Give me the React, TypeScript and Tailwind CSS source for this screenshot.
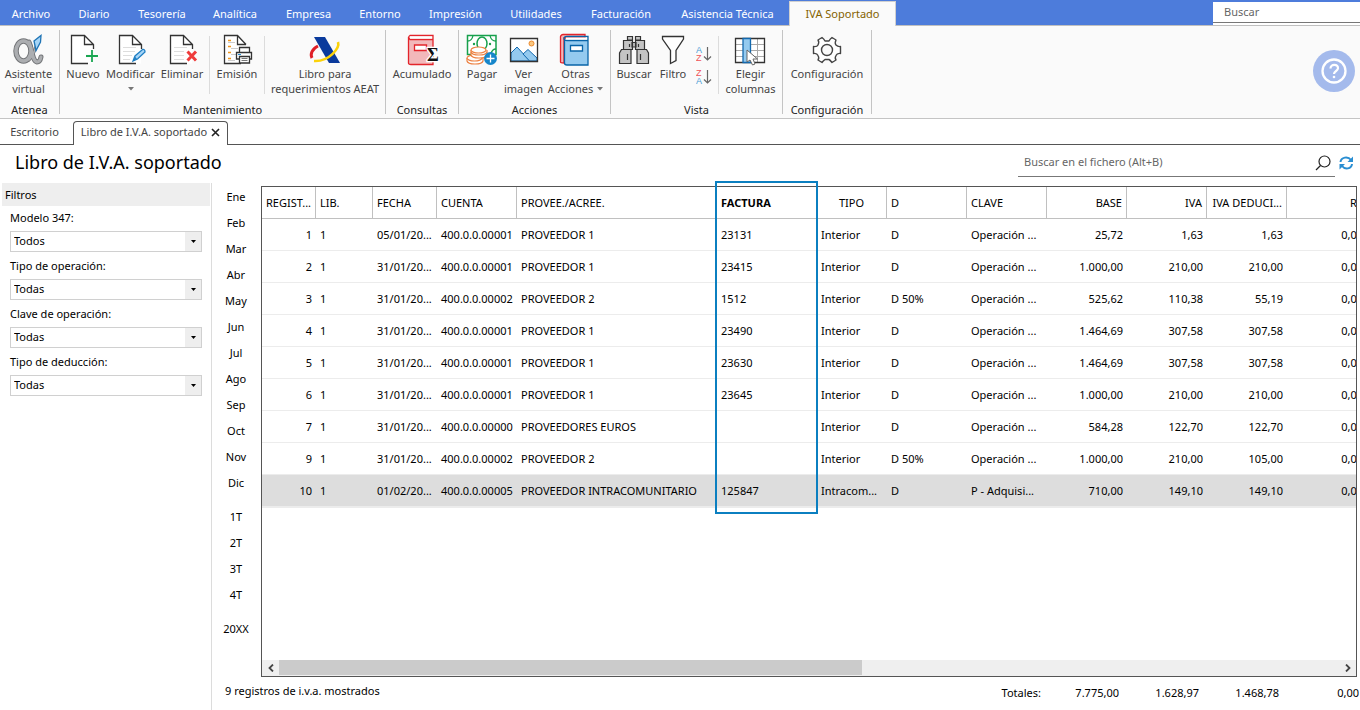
import React from "react";

type Item = { label: string; width: string };

const MENUS: Item[] = [
  { label: "Archivo", width: "w-[62px]" },
  { label: "Diario", width: "w-16" },
  { label: "Tesorería", width: "w-[72px]" },
  { label: "Analítica", width: "w-[74px]" },
  { label: "Empresa", width: "w-[73px]" },
  { label: "Entorno", width: "w-[70px]" },
  { label: "Impresión", width: "w-[81px]" },
  { label: "Utilidades", width: "w-[80px]" },
  { label: "Facturación", width: "w-[90px]" },
  { label: "Asistencia Técnica", width: "w-[123px]" },
];

const FILTERS = [
  { id: "modelo", label: "Modelo 347:", value: "Todos" },
  { id: "tipo-op", label: "Tipo de operación:", value: "Todas" },
  { id: "clave-op", label: "Clave de operación:", value: "Todas" },
  { id: "tipo-ded", label: "Tipo de deducción:", value: "Todas" },
];

const MONTHS = ["Ene", "Feb", "Mar", "Abr", "May", "Jun", "Jul", "Ago", "Sep", "Oct", "Nov", "Dic"];
const QUARTERS = ["1T", "2T", "3T", "4T"];

const COLUMNS = [
  { label: "REGIST...", col: "w-[54px]", align: "text-left font-normal", line: true },
  { label: "LIB.", col: "w-[57px]", align: "text-left font-normal", line: true },
  { label: "FECHA", col: "w-16", align: "text-left font-normal", line: true },
  { label: "CUENTA", col: "w-20", align: "text-left font-normal", line: true },
  { label: "PROVEE./ACREE.", col: "w-[200px]", align: "text-left font-normal", line: true },
  { label: "FACTURA", col: "w-[100px]", align: "text-left font-bold", line: true },
  { label: "TIPO", col: "w-[70px]", align: "text-center font-normal", line: true },
  { label: "D", col: "w-20", align: "text-left font-normal", line: true },
  { label: "CLAVE", col: "w-20", align: "text-left font-normal", line: true },
  { label: "BASE", col: "w-20", align: "text-right font-normal", line: true },
  { label: "IVA", col: "w-20", align: "text-right font-normal", line: true },
  { label: "IVA DEDUCI...", col: "w-20", align: "text-right font-normal", line: true },
  { label: "RE", col: "w-20", align: "text-right font-normal", line: false },
];

const RIGHT = [0, 9, 10, 11, 12];

const ROWS = [
  ["1", "1", "05/01/20...", "400.0.0.00001", "PROVEEDOR 1", "23131", "Interior", "D", "Operación ...", "25,72", "1,63", "1,63", "0,00"],
  ["2", "1", "31/01/20...", "400.0.0.00001", "PROVEEDOR 1", "23415", "Interior", "D", "Operación ...", "1.000,00", "210,00", "210,00", "0,00"],
  ["3", "1", "31/01/20...", "400.0.0.00002", "PROVEEDOR 2", "1512", "Interior", "D 50%", "Operación ...", "525,62", "110,38", "55,19", "0,00"],
  ["4", "1", "31/01/20...", "400.0.0.00001", "PROVEEDOR 1", "23490", "Interior", "D", "Operación ...", "1.464,69", "307,58", "307,58", "0,00"],
  ["5", "1", "31/01/20...", "400.0.0.00001", "PROVEEDOR 1", "23630", "Interior", "D", "Operación ...", "1.464,69", "307,58", "307,58", "0,00"],
  ["6", "1", "31/01/20...", "400.0.0.00001", "PROVEEDOR 1", "23645", "Interior", "D", "Operación ...", "1.000,00", "210,00", "210,00", "0,00"],
  ["7", "1", "31/01/20...", "400.0.0.00000", "PROVEEDORES EUROS", "", "Interior", "D", "Operación ...", "584,28", "122,70", "122,70", "0,00"],
  ["9", "1", "31/01/20...", "400.0.0.00002", "PROVEEDOR 2", "", "Interior", "D 50%", "Operación ...", "1.000,00", "210,00", "105,00", "0,00"],
  ["10", "1", "01/02/20...", "400.0.0.00005", "PROVEEDOR INTRACOMUNITARIO", "125847", "Intracom...", "D", "P - Adquisi...", "710,00", "149,10", "149,10", "0,00"],
];

function Icon({ children }: { children: React.ReactNode }) {
  return (
    <svg width="32" height="32" viewBox="0 0 32 32" fill="none" className="block shrink-0 overflow-visible" aria-hidden="true">
      {children}
    </svg>
  );
}

function Sheet() {
  return (
    <>
      <path d="M4.5 1.5H17.5L26 10.5V29.5H4.5Z" fill="#fff" />
      <path d="M26.5 15V10.5L17.5 1.5H4.5V29.5H21M17.5 1.5V10.5H26.5" stroke="#333" strokeWidth="1.3" />
    </>
  );
}

const AlphaIcon = () => (
  <Icon>
    <g stroke="#75777a" strokeLinecap="round">
      <ellipse cx="10.5" cy="17" rx="7.5" ry="10" strokeWidth="5.5" />
      <path d="M16 8C19 14 19 27 24 28Q27 28 28 23" strokeWidth="5" />
      <path d="M24 9C22 17 20 22 16 26" strokeWidth="3" />
    </g>
    <g stroke="#acaeb1" strokeLinecap="round">
      <ellipse cx="10.5" cy="17" rx="7.5" ry="10" strokeWidth="3.5" />
      <path d="M16 8C19 14 19 27 24 28Q27 28 28 23" strokeWidth="3" />
      <path d="M24 9C22 17 20 22 16 26" strokeWidth="1.5" />
    </g>
    <path d="M21 7 28 1.5 27.5 8 23 16.5Z" fill="#a6d5f7" stroke="#1f74b5" strokeWidth="1.3" />
  </Icon>
);
const NewIcon = () => (
  <Icon>
    <Sheet />
    <path d="M25 16V28M19 22H31" stroke="#fafafa" strokeWidth="4" />
    <path d="M25 16V28M19 22H31" stroke="#19a651" strokeWidth="1.8" />
  </Icon>
);
const EditIcon = () => (
  <Icon>
    <Sheet />
    <path d="M8 13.5H21M8 17.5H20M8 21.5H17M8 25.5H15" stroke="#ddd" />
    <path d="M18 27 20 22 27.5 15.5Q30 15 30 18L22.5 25Z" fill="#a6d5f7" stroke="#1f7fc4" strokeWidth="1.3" />
    <path d="M18 27 20 22.5 22 25Z" fill="#1f7fc4" />
  </Icon>
);
const DeleteIcon = () => (
  <Icon>
    <Sheet />
    <path d="M8 13.5H21M8 17.5H18M8 21.5H18M8 25.5H18" stroke="#ddd" />
    <path d="M21.5 17.5 30 26.5M30 17.5 21.5 26.5" stroke="#ef3b3b" strokeWidth="3" />
  </Icon>
);
const PrintIcon = () => (
  <Icon>
    <path d="M3.5 1.5H16.5L25 10.5V29.5H3.5Z" fill="#fff" />
    <path d="M25 10.5 16.5 1.5H3.5V29.5H20M16.5 1.5V10.5H25" stroke="#333" strokeWidth="1.3" />
    <path d="M7 6.5H10M7 12.5H10M7 18.5H10M7 24.5H10" stroke="#f0961e" strokeWidth="1.3" />
    <path d="M7 8.5H14M10 14.5H17M10 20.5H15M7 26.5H14" stroke="#ccc" />
    <path d="M18.5 18V13.5H28.5V18M18.5 25H15.5V18.5H30.5V25H28.5M18.5 22.5H28.5V29H18.5Z" fill="#fff" stroke="#333" strokeWidth="1.3" />
    <path d="M20.5 24.5H26.5M20.5 26.5H26.5" stroke="#777" />
    <path d="M17 20.5H20" stroke="#1f8ad0" />
  </Icon>
);
const AeatIcon = () => (
  <Icon>
    <path d="M9 12C3 15 1 20 3 24" stroke="#df1f26" strokeWidth="3" />
    <path d="M5 3H16L31 29H20Z" fill="#0a3a9c" />
    <path d="M29 8C31 14 20 28 5 27" stroke="#fbd20a" strokeWidth="2.6" />
  </Icon>
);
const SumIcon = () => (
  <Icon>
    <path d="M3 3Q2 30 3 30H27V6H4Z" fill="#f2b8ba" />
    <path d="M27 1.5H4Q1.5 3 4 5.5H27ZM2.5 3V29Q2.5 30.5 5 30.5H27V5.5" stroke="#e3242b" strokeWidth="1.3" />
    <path d="M4 2.5H26V4.5H4Z" fill="#fff" />
    <path d="M8.5 11H20.5V16.5H8.5Z" fill="#fff" stroke="#e3242b" strokeWidth="1.3" />
    <text x="21" y="27" fontFamily="Liberation Serif, serif" fontWeight="700" fontSize="18" fill="#111" stroke="#fff" strokeWidth="2.5" paintOrder="stroke">Σ</text>
  </Icon>
);
const PayIcon = () => (
  <Icon>
    <path d="M1.5 1.5H30V20.5H1.5Z" fill="#fff" stroke="#17a04c" strokeWidth="1.5" />
    <path d="M1.5 7Q6 7 7 1.5M24 1.5Q25 7 30 7M30 15Q26 15 25 20" stroke="#17a04c" strokeWidth="1.3" />
    <ellipse cx="16" cy="9.5" rx="5" ry="6.5" stroke="#17a04c" strokeWidth="1.5" />
    <circle cx="8" cy="10" r="1.2" fill="#17a04c" />
    <circle cx="24" cy="10" r="1.2" fill="#17a04c" />
    <g fill="#fff" stroke="#ed8243" strokeWidth="1.2">
      <path d="M1 24V27C2 31 16 31 17 27V24" />
      <ellipse cx="8.5" cy="24" rx="7.5" ry="3" />
      <path d="M5 16V21C6 25 20 25 21 21V16" />
      <path d="M5 18C6 22 20 22 21 18" />
      <ellipse cx="12.5" cy="16" rx="7.5" ry="3" />
    </g>
    <circle cx="24.5" cy="24.5" r="6.5" fill="#1686ca" />
    <path d="M24.5 20.5V28.5M20.5 24.5H28.5" stroke="#fff" strokeWidth="1.3" />
  </Icon>
);
const ImageIcon = () => (
  <Icon>
    <path d="M2.5 4.5H29.5V27.5H2.5Z" fill="#fff" />
    <path d="M3 19 9 13 22 27H3Z" fill="#94caef" stroke="#1369ae" />
    <path d="M15 20 20 15.5 29 24V27H21.5Z" fill="#94caef" stroke="#1369ae" />
    <circle cx="23.5" cy="9.5" r="2.5" fill="#f9c780" stroke="#ed8a2d" />
    <path d="M2.5 4.5H29.5V27.5H2.5Z" stroke="#333" strokeWidth="1.3" />
  </Icon>
);
const BooksIcon = () => (
  <Icon>
    <path d="M25 .5H3Q0 1 .5 4V28Q.5 29 4 29V4H25Z" fill="#f4b6b8" stroke="#e3242b" strokeWidth="1.3" />
    <path d="M4.5 6H28V31H7Q4.5 31 4.5 28Z" fill="#94caef" />
    <path d="M28 2.5H7Q4 2.5 4 4.5Q4 6.5 7 6.5H28ZM4.5 5V29Q4.5 31 7 31H28V6.5" stroke="#0864a8" strokeWidth="1.3" />
    <path d="M6 3.5H27V5.5H6Z" fill="#fff" />
    <path d="M10.500 11.500H22.500V17H10.500Z" fill="#fff" stroke="#0864a8" strokeWidth="1.3" />
  </Icon>
);
const BinocularsIcon = () => (
  <Icon>
    <g fill="#c4c4c4" stroke="#333" strokeWidth="1.2">
      <path d="M9.5 2.5H14.5V6H9.5ZM17.5 2.5H22.5V6H17.5ZM5.5 6.5H14.5V15.5H5.5ZM17.5 6.5H26.5V15.5H17.5ZM14 8.5H18V13H14Z" />
      <path d="M3.5 15.5H13V29.5H1.5V19ZM19 15.5H28.5L30.5 19V29.5H19Z" />
    </g>
    <path d="M11.5 10V13M20.5 10V13M9.5 20V26M22.5 20V26" stroke="#333" strokeWidth="1.2" />
  </Icon>
);
const FilterIcon = () => (
  <Icon>
    <path d="M5.5 2.5H26.5V5L19 16.5V26.5L13.5 29.5V16.5L5.5 5Z" fill="#fff" stroke="#333" strokeWidth="1.3" />
  </Icon>
);
const ColumnsIcon = () => (
  <Icon>
    <path d="M.5 4.5H29.5V28.5H.5Z" fill="#fff" />
    <path d="M1 10.5H29M1 16.5H29M1 22.5H29M15.5 5V28M22.5 5V28" stroke="#aaa" />
    <path d="M.5 4.5H29.5V28.5H.5Z" stroke="#333" strokeWidth="1.3" />
    <path d="M8 4.5H15.5V28.5H8Z" fill="#94caef" stroke="#1369ae" strokeWidth="1.3" />
    <path d="M12 16V28L15 26 17.5 31 20 30 18 25H22.5Z" fill="#fff" stroke="#666" />
  </Icon>
);
const GearIcon = () => (
  <Icon>
    <path d="M11 3.5Q13 5 14 7H18Q19 5 21 3.5L25 6Q23.5 9 25 11Q27 13 29.5 12.5V19.5Q26 19 25 21.5Q23.5 24 25 26L21 28.5Q19 26 18 25.5H14Q12 27 11 28.5L7 26Q8.5 24 7 21.5Q6 19 2.5 19.5V12.5Q6 13 7 11Q8.5 8 7 6Z" fill="#fff" stroke="#444" strokeWidth="1.4" strokeLinejoin="round" />
    <circle cx="16" cy="16" r="5.5" fill="#fafafa" stroke="#444" strokeWidth="1.4" />
  </Icon>
);

function SortIcon({ top, bottom }: { top: string; bottom: string }) {
  return (
    <svg width="16" height="17" viewBox="0 0 16 17" fill="none" className="block" aria-hidden="true">
      <text x="0" y="7" fontFamily="Liberation Sans, sans-serif" fontSize="9" fill={top === "A" ? "#4a9bd4" : "#ef5257"}>{top}</text>
      <text x="0" y="15" fontFamily="Liberation Sans, sans-serif" fontSize="9" fill={bottom === "A" ? "#4a9bd4" : "#ef5257"}>{bottom}</text>
      <path d="M11.5 1V14M8 10.5 11.5 14 15 10.5" stroke="#666" strokeWidth="1.2" />
    </svg>
  );
}

const Caret = () => (
  <svg width="6" height="4" viewBox="0 0 6 4" className="inline-block" aria-hidden="true">
    <path d="M0 0H6L3 3.5Z" fill="#777" />
  </svg>
);

function Tool({ width, icon, lines, caret }: { width: string; icon: React.ReactNode; lines: string[]; caret?: "below" | "side" }) {
  return (
    <button type="button" className={`flex shrink-0 flex-col items-center whitespace-nowrap pt-2 text-[#444] ${width}`}>
      {icon}
      <span className="leading-[15px]">{lines[0]}</span>
      {lines[1] && (
        <span className="flex items-center gap-1 leading-[15px]">
          {lines[1]}
          {caret === "side" && <Caret />}
        </span>
      )}
      {caret === "below" && <span className="flex h-[15px] items-center"><Caret /></span>}
    </button>
  );
}

function Group({ width, caption, children }: { width: string; caption: string; children: React.ReactNode }) {
  return (
    <section aria-label={caption} className={`flex shrink-0 flex-col ${width}`}>
      <div className="flex h-[76px]">{children}</div>
      <h2 className="text-center leading-4 text-[#222]">{caption}</h2>
    </section>
  );
}

const GroupLine = () => <div className="mt-1 mb-1 w-px shrink-0 bg-[#c4c4c4]" />;
const ToolLine = () => <div className="mt-2.5 mb-2 w-px shrink-0 bg-[#dcdcdc]" />;

function Header() {
  return (
    <header>
      <nav className="flex h-[26px] border-b border-[#c0c0c0] bg-[#4d7cdb] text-white">
        {MENUS.map((m) => (
          <button key={m.label} type="button" className={`shrink-0 whitespace-nowrap pt-1 ${m.width}`}>{m.label}</button>
        ))}
        <button type="button" className="-mb-px mt-px w-[107px] shrink-0 border border-b-0 border-[#d0d0d0] bg-[#fafafa] text-[#846200]">
          IVA Soportado
        </button>
        <div className="ml-auto mt-0.5 w-[147px] bg-white">
          <input aria-label="Buscar" placeholder="Buscar" className="block h-[21px] w-full border-b border-[#777] px-[11px] pb-0.5 outline-none placeholder:text-[#666]" />
        </div>
      </nav>
      <div className="flex h-[93px] border-b border-[#c4c4c4] bg-[#fafafa]">
        <Group width="w-[59px]" caption="Atenea">
          <Tool width="w-[57px]" icon={<AlphaIcon />} lines={["Asistente", "virtual"]} />
        </Group>
        <GroupLine />
        <Group width="w-[325px]" caption="Mantenimiento">
          <Tool width="w-[46px]" icon={<NewIcon />} lines={["Nuevo"]} />
          <Tool width="w-[49px]" icon={<EditIcon />} lines={["Modificar"]} caret="below" />
          <Tool width="w-[54px]" icon={<DeleteIcon />} lines={["Eliminar"]} />
          <ToolLine />
          <Tool width="w-[54px]" icon={<PrintIcon />} lines={["Emisión"]} />
          <ToolLine />
          <Tool width="w-[120px]" icon={<AeatIcon />} lines={["Libro para", "requerimientos AEAT"]} />
        </Group>
        <GroupLine />
        <Group width="w-[72px]" caption="Consultas">
          <Tool width="w-[72px]" icon={<SumIcon />} lines={["Acumulado"]} />
        </Group>
        <GroupLine />
        <Group width="w-[151px]" caption="Acciones">
          <Tool width="w-[46px]" icon={<PayIcon />} lines={["Pagar"]} />
          <Tool width="w-[37px]" icon={<ImageIcon />} lines={["Ver", "imagen"]} />
          <Tool width="w-[67px]" icon={<BooksIcon />} lines={["Otras", "Acciones"]} caret="side" />
        </Group>
        <GroupLine />
        <Group width="w-[171px]" caption="Vista">
          <Tool width="w-[46px]" icon={<BinocularsIcon />} lines={["Buscar"]} />
          <Tool width="w-[32px]" icon={<FilterIcon />} lines={["Filtro"]} />
          <div className="flex w-[29px] flex-col items-center gap-1.5 pt-5">
            <button type="button" aria-label="Orden ascendente"><SortIcon top="A" bottom="Z" /></button>
            <button type="button" aria-label="Orden descendente"><SortIcon top="Z" bottom="A" /></button>
          </div>
          <ToolLine />
          <Tool width="w-[63px]" icon={<ColumnsIcon />} lines={["Elegir", "columnas"]} />
        </Group>
        <GroupLine />
        <Group width="w-[88px]" caption="Configuración">
          <Tool width="w-[88px]" icon={<GearIcon />} lines={["Configuración"]} />
        </Group>
        <GroupLine />
        <button type="button" aria-label="Ayuda" className="ml-auto mr-[5px] mt-6 h-[42px]">
          <svg width="42" height="42" viewBox="0 0 42 42" fill="none" className="block" aria-hidden="true">
            <circle cx="21" cy="21" r="21" fill="#a4baec" />
            <circle cx="21" cy="21" r="11.5" stroke="#fff" strokeWidth="2.3" />
            <path d="M17.5 18.5C17.5 13.5 25 13.8 25 18.3C25 21 21 21 21 24" stroke="#fff" strokeWidth="2.2" />
            <circle cx="21" cy="27" r="1.3" fill="#fff" />
          </svg>
        </button>
      </div>
    </header>
  );
}

function DocumentTabs() {
  return (
    <div className="flex h-[26px] text-[#444]">
      <button type="button" className="w-[73px] border-b border-[#555] pr-1 pt-0.5">Escritorio</button>
      <div className="mt-0.5 flex w-[155px] shrink-0 items-center justify-center gap-1 whitespace-nowrap rounded-t border border-b-0 border-[#555] pb-0.5">
        <span>Libro de I.V.A. soportado</span>
        <button type="button" aria-label="Cerrar pestaña">
          <svg width="9" height="9" viewBox="0 0 9 9" className="block" aria-hidden="true"><path d="M1 1 8 8M8 1 1 8" stroke="#222" strokeWidth="1.6" /></svg>
        </button>
      </div>
      <div className="grow border-b border-[#555]" />
    </div>
  );
}

function TitleRow() {
  return (
    <div className="flex h-[38px] justify-between pl-[15px] pr-1.5">
      <h1 className="pt-[5px] text-lg leading-6 text-black">Libro de I.V.A. soportado</h1>
      <div className="flex items-start gap-1 pt-1">
        <div className="flex h-7 w-[317px] items-center border-b border-[#777] pl-1.5 pr-1">
          <input aria-label="Buscar en el fichero" placeholder="Buscar en el fichero (Alt+B)" className="min-w-0 grow outline-none placeholder:text-[#666]" />
          <button type="button" aria-label="Buscar">
            <svg width="16" height="16" viewBox="0 0 16 16" fill="none" className="block" aria-hidden="true">
              <circle cx="9.5" cy="6.5" r="5.5" stroke="#222" strokeWidth="1.2" />
              <path d="M5.5 10.5 1 15" stroke="#222" strokeWidth="1.2" />
            </svg>
          </button>
        </div>
        <button type="button" aria-label="Actualizar" className="mt-[7px]">
          <svg width="15" height="14" viewBox="0 0 15 14" fill="none" className="block" aria-hidden="true">
            <path d="M1.5 6C2 1 9 0 12 4M13 8C12.5 13 6 14 3 10" stroke="#2a8ed2" strokeWidth="2" />
            <path d="M14 .5V6H8.5ZM.5 13.5V8H6Z" fill="#2a8ed2" />
          </svg>
        </button>
      </div>
    </div>
  );
}

function Filters() {
  return (
    <aside className="w-[212px] shrink-0 border-r border-[#dcdcdc] pl-0.5 pr-px">
      <h2 className="bg-[#eee] pl-[3px] leading-[23px] text-black">Filtros</h2>
      <div className="pl-2 pr-2 pt-[3px]">
        {FILTERS.map((f) => (
          <div key={f.id} className="mb-[5px] flex flex-col gap-1">
            <label htmlFor={f.id} className="leading-[18px]">{f.label}</label>
            <div className="relative">
              <select id={f.id} className="block h-[21px] w-full appearance-none border border-[#d0d0d0] bg-white pl-[3px] outline-none">
                <option>{f.value}</option>
              </select>
              <span className="pointer-events-none absolute inset-y-px right-px flex w-4 items-center justify-center bg-[#eee]">
                <svg width="5" height="3" viewBox="0 0 5 3" aria-hidden="true"><path d="M0 0H5L2.5 3Z" fill="#000" /></svg>
              </span>
            </div>
          </div>
        ))}
      </div>
    </aside>
  );
}

function Periods() {
  const item = "h-[26px] w-full text-center";
  return (
    <nav aria-label="Periodos" className="flex w-[49px] shrink-0 flex-col gap-2 pr-px pt-px">
      <div>{MONTHS.map((m) => <button key={m} type="button" className={item}>{m}</button>)}</div>
      <div>{QUARTERS.map((q) => <button key={q} type="button" className={item}>{q}</button>)}</div>
      <button type="button" className={item}>20XX</button>
    </nav>
  );
}

function Ledger() {
  return (
    <div className="relative mr-[3px] mt-[3px] flex min-w-0 grow flex-col border border-[#555]">
      <div className="grow overflow-hidden">
        <table className="w-[1105px] table-fixed border-separate border-spacing-0 whitespace-nowrap">
          <colgroup>{COLUMNS.map((c) => <col key={c.label} className={c.col} />)}</colgroup>
          <thead>
            <tr className="h-8">
              {COLUMNS.map((c) => (
                <th key={c.label} scope="col" className={`border-b border-[#c0c0c0] px-1 pb-0 pt-0.5 ${c.line ? "border-r" : ""} ${c.align}`}>{c.label}</th>
              ))}
            </tr>
          </thead>
          <tbody>
            {ROWS.map((r, ri) => (
              <tr key={r[0]} className={ri === ROWS.length - 1 ? "h-8 bg-[#ddd]" : "h-8"}>
                {r.map((v, i) => (
                  <td key={i} className={`border-b border-[#ececec] px-1 pb-0 pt-0.5 ${RIGHT.includes(i) ? "text-right" : "text-left"}`}>{v}</td>
                ))}
              </tr>
            ))}
          </tbody>
        </table>
        <div className="h-px bg-[#ececec]" />
      </div>
      <div className="flex h-4 bg-[#efefef]">
        <button type="button" aria-label="Desplazar a la izquierda" className="flex w-[17px] items-center justify-center">
          <svg width="6" height="8" viewBox="0 0 6 8" fill="none" aria-hidden="true"><path d="M5 .5 1.5 4 5 7.5" stroke="#444" strokeWidth="1.8" /></svg>
        </button>
        <div className="grow"><div className="h-[15px] w-[55%] bg-[#cbcbcb]" /></div>
        <button type="button" aria-label="Desplazar a la derecha" className="flex w-[17px] items-center justify-center">
          <svg width="6" height="8" viewBox="0 0 6 8" fill="none" aria-hidden="true"><path d="M1 .5 4.5 4 1 7.5" stroke="#444" strokeWidth="1.8" /></svg>
        </button>
      </div>
      <div className="pointer-events-none absolute -top-1.5 left-[453px] h-[333px] w-[103px] border-2 border-[#0b7fc0]" />
    </div>
  );
}

export default function App() {
  return (
    <div className="flex min-h-screen flex-col overflow-hidden bg-white font-['Noto_Sans',sans-serif] text-[11px] text-black">
      <Header />
      <DocumentTabs />
      <TitleRow />
      <main className="flex grow">
        <Filters />
        <div className="flex min-w-0 grow flex-col">
          <div className="flex grow">
            <Periods />
            <Ledger />
          </div>
          <footer className="flex h-[33px] justify-between whitespace-nowrap pl-[13px] pr-px">
            <p className="leading-7">9 registros de i.v.a. mostrados</p>
            <div className="flex text-right leading-8">
              <span>Totales:</span>
              <span className="w-[78px]">7.775,00</span>
              <span className="w-20">1.628,97</span>
              <span className="w-20">1.468,78</span>
              <span className="w-20">0,00</span>
            </div>
          </footer>
        </div>
      </main>
    </div>
  );
}
